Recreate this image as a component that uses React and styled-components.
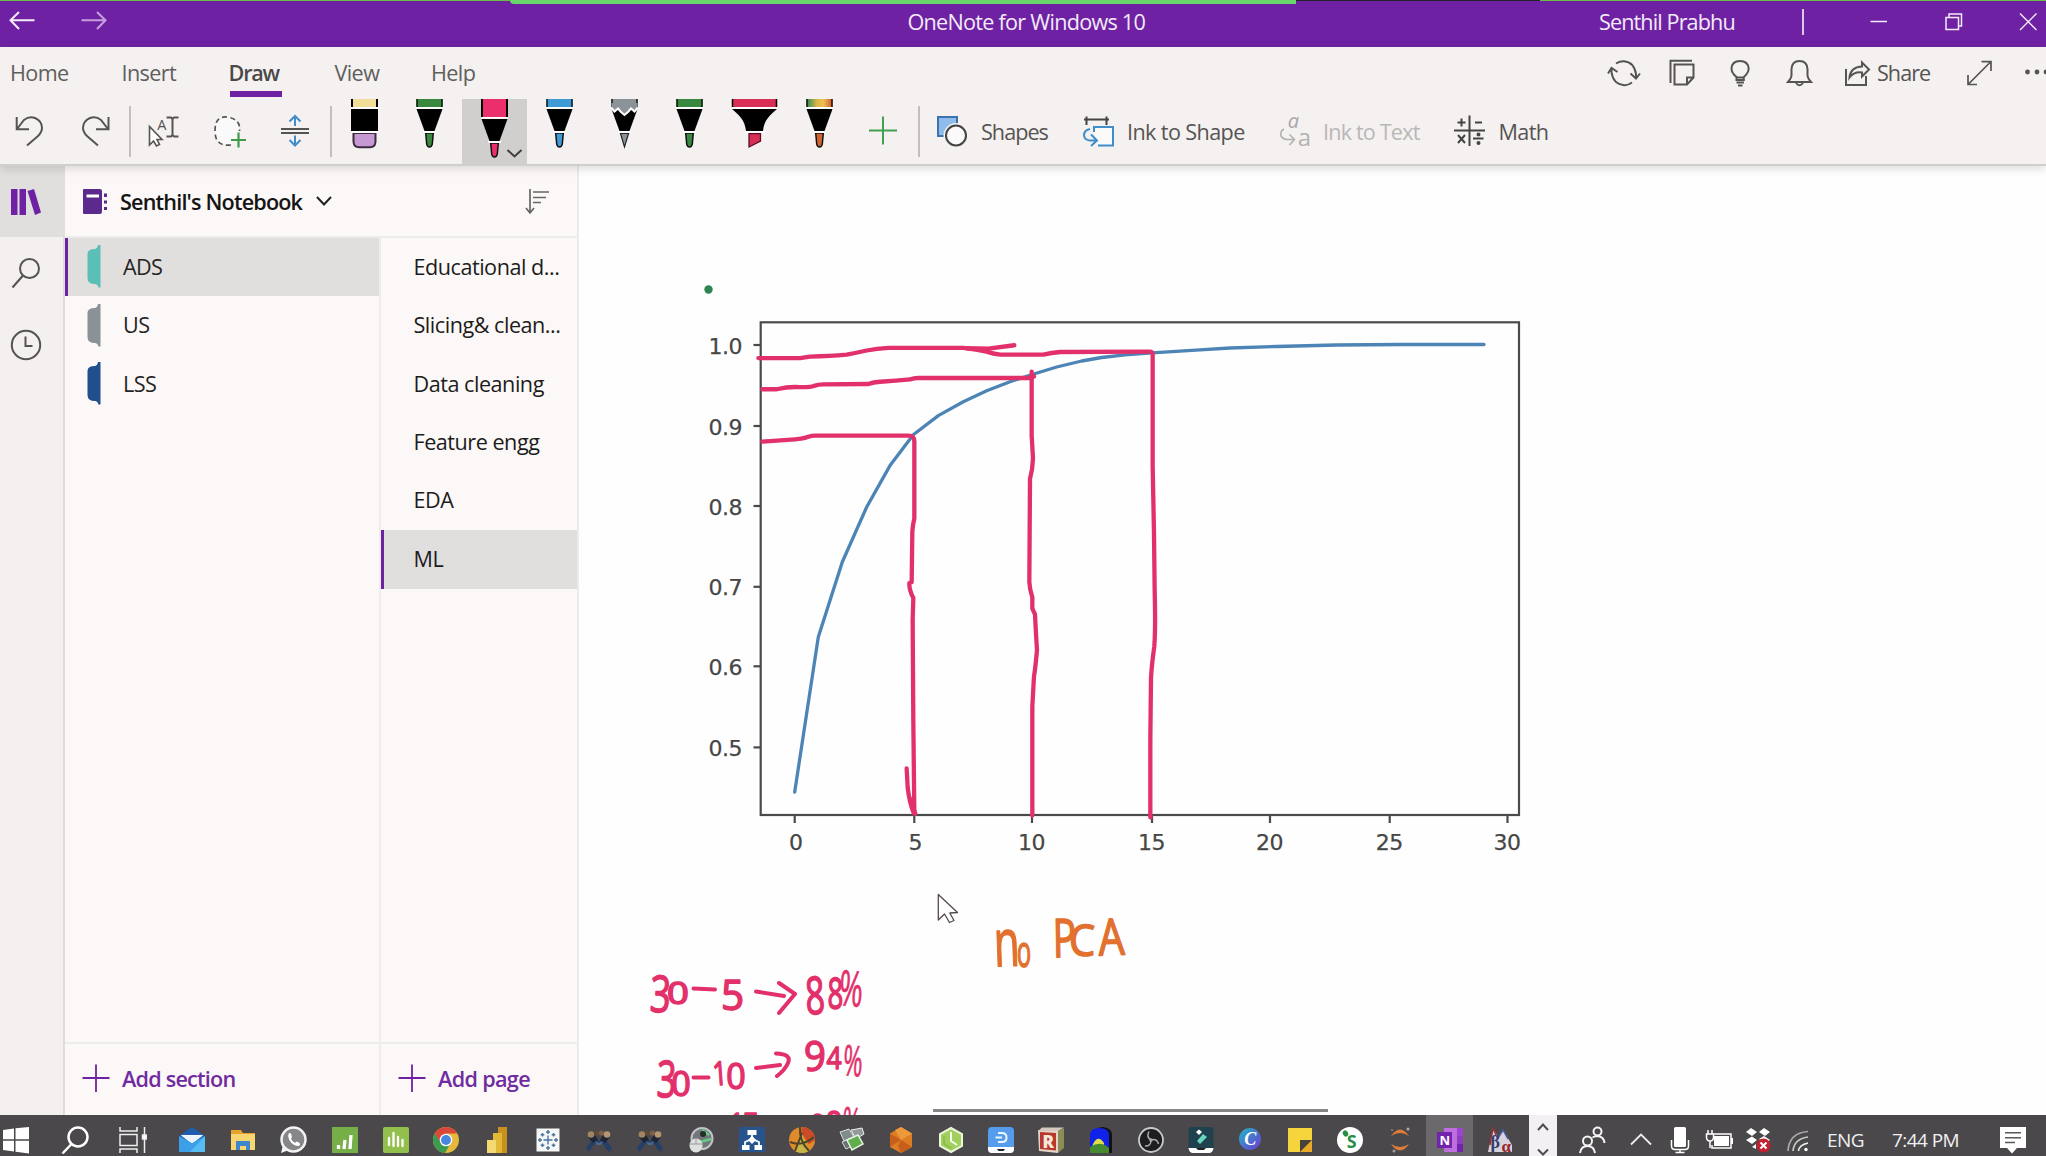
import React from "react";
import styled, { createGlobalStyle, css } from "styled-components";

const Global = createGlobalStyle`
  * { box-sizing: border-box; }
  html, body { margin: 0; padding: 0; overflow: hidden; }
  body { font-family: "Open Sans", "Noto Sans", sans-serif; font-size: 21.6px; letter-spacing: -0.028em; }
  svg { display: block; flex: none; }
`;

const PURPLE = "#6e22a3";
const INK = "#e2306a";
const ORANGE = "#e2702e";
const GREY = "#565453";

/* ---------- shell ---------- */
const Window = styled.div`
  position: relative;
  width: 2046px;
  height: 1156px;
  display: flex;
  flex-direction: column;
  overflow: hidden;
  background: #fefefe;
`;
const ShareEdge = styled.div`
  position: absolute;
  top: 0;
  left: 0;
  right: 0;
  display: flex;
  align-items: flex-start;
`;
const EdgePiece = styled.i`
  width: ${(p) => p.$w}px;
  height: ${(p) => p.$h}px;
  background: ${(p) => p.$c};
  border-bottom-left-radius: ${(p) => (p.$h > 2 ? 4 : 0)}px;
`;
const Drawing = styled.svg`
  margin-left: ${(p) => p.$ml || 0}px;
`;
const Label = styled.span`
  margin-left: ${(p) => p.$ml || 0}px;
  width: ${(p) => (p.$w ? p.$w + "px" : "auto")};
  flex: none;
  white-space: nowrap;
  color: ${(p) => p.$c || GREY};
  font-weight: ${(p) => p.$weight || 400};
  ${(p) => p.$ls && css`letter-spacing: ${p.$ls}em;`}
`;

const TitleBar = styled.header`
  flex: none;
  height: 47px;
  display: flex;
  align-items: center;
  padding-bottom: 4px;
  background: ${PURPLE};
`;
const TitleRule = styled.i`
  width: 2px;
  height: 26px;
  margin-left: 67px;
  background: #dcc6ea;
`;
const Ribbon = styled.section`
  position: relative;
  z-index: 1;
  flex: none;
  height: 119px;
  background: #f4f1f0;
  border-bottom: 2px solid #d1cfcd;
  box-shadow: 0 3px 9px rgba(0, 0, 0, 0.13);
`;
const TabRow = styled.nav`
  height: 52px;
  display: flex;
  align-items: center;
  ${Label} { padding-bottom: 2px; }
`;
const Tab = styled.div`
  position: relative;
  height: 52px;
  width: ${(p) => p.$w}px;
  margin-left: ${(p) => p.$ml}px;
  padding-bottom: 2px;
  display: flex;
  align-items: center;
  color: ${(p) => (p.$active ? "#4b4948" : "#605e5d")};
  font-weight: ${(p) => (p.$active ? 600 : 400)};
  letter-spacing: ${(p) => (p.$active ? "-0.055em" : "-0.028em")};
  &::after {
    content: "";
    display: ${(p) => (p.$active ? "block" : "none")};
    position: absolute;
    left: 1px;
    right: 0;
    bottom: 2px;
    height: 6px;
    background: ${PURPLE};
  }
`;
const ToolRow = styled.div`
  height: 65px;
  display: flex;
  align-items: center;
  ${Label} { padding-bottom: 1px; }
`;
const Rule = styled.i`
  flex: none;
  width: 2px;
  height: 51px;
  margin-left: ${(p) => p.$ml}px;
  background: #c1bfbf;
`;
const PenSlot = styled.div`
  flex: none;
  width: 65px;
  height: 65px;
  background: ${(p) => (p.$active ? "#d1cfce" : "transparent")};
`;

/* ---------- body ---------- */
const Body = styled.main`
  flex: 1;
  min-height: 0;
  display: flex;
`;
const Rail = styled.aside`
  flex: none;
  width: 65px;
  background: #f3f0ef;
  border-right: 2px solid #dfdddc;
`;
const RailItem = styled.div`
  width: 65px;
  height: ${(p) => p.$h}px;
  background: ${(p) => (p.$active ? "#e1dfde" : "transparent")};
`;
const Panel = styled.aside`
  flex: none;
  width: 514px;
  display: flex;
  flex-direction: column;
  background: #fbf8f7;
  border-right: 2px solid #ecebeb;
`;
const PanelHead = styled.div`
  flex: none;
  height: 72px;
  display: flex;
  align-items: center;
  border-bottom: 2px solid #eeeceb;
`;
const Columns = styled.div`
  flex: 1;
  display: flex;
`;
const Column = styled.div`
  width: ${(p) => p.$w}px;
  display: flex;
  flex-direction: column;
  border-right: ${(p) => (p.$last ? "none" : "2px solid #efedec")};
`;
const Row = styled.div`
  flex: none;
  height: 58.45px;
  display: flex;
  align-items: center;
  padding: 0 0 2px ${(p) => p.$pad}px;
  color: #1d1c1c;
  letter-spacing: -0.022em;
  white-space: nowrap;
  background: ${(p) => (p.$active ? "#e1dfde" : "transparent")};
  box-shadow: ${(p) => (p.$active ? `inset 3px 0 ${PURPLE}` : "none")};
`;
const ColumnFoot = styled.div`
  margin-top: auto;
  height: 73px;
  display: flex;
  align-items: center;
  padding: 0 0 2px 17px;
  border-top: 2px solid #eeeceb;
`;
const Canvas = styled.section`
  position: relative;
  flex: 1;
  background: #fefefe;
`;
const ScrollThumb = styled.i`
  position: absolute;
  left: 354px;
  bottom: 3px;
  width: 395px;
  height: 3px;
  background: #858585;
`;

/* ---------- taskbar ---------- */
const TaskBar = styled.footer`
  flex: none;
  height: 41px;
  display: flex;
  background: #4a484a;
`;
const TaskCell = styled.div`
  flex: none;
  height: 41px;
  width: ${(p) => p.$w}px;
  margin-left: ${(p) => p.$ml || 0}px;
  display: flex;
  justify-content: center;
  background: ${(p) => p.$bg || "transparent"};
`;
const TrayText = styled.span`
  flex: none;
  height: 41px;
  line-height: 50px;
  margin-left: ${(p) => p.$ml}px;
  width: ${(p) => p.$w}px;
  font-size: 19px;
  letter-spacing: -0.03em;
  color: #f2f0f2;
  white-space: nowrap;
`;

/* Each row of icons shares the window's coordinate system. */
const Icon = ({ x, w, y, h, ml, children, c = GREY, sw = 2 }) => (
  <Drawing $ml={ml} width={w} height={h} viewBox={`${x} ${y} ${w} ${h}`} fill="none" stroke={c} strokeWidth={sw}>
    {children}
  </Drawing>
);
const ToolIcon = (p) => <Icon y={99} h={65} {...p} />;
const TabIcon = (p) => <Icon y={47} h={52} {...p} />;
const TitleIcon = (p) => <Icon y={0} h={43} c="#f5ecfa" {...p} />;

const Pen = ({ color, kind }) => {
  const d = kind === "active" ? 10 : 0;
  const id = "rainbow";
  const fill = kind === "rainbow" ? `url(#${id})` : color;
  if (kind === "eraser")
    return (
      <svg width="65" height="65" viewBox="0 0 65 65">
        <path d="M19 0H46V8H19Z" fill="#f1dd97" />
        <path d="M20 0V8M45 0V8" stroke="#000" strokeWidth="2" />
        <path d="M19 8.8H46" stroke="#fff" strokeWidth="1.6" />
        <path d="M19 10H46V32H19Z" />
        <path d="M21.5 34V43Q22 48.300 27 48.300H38Q43 48.300 43.500 43V34Z" fill="#c799d3" stroke="#3b2c40" strokeWidth="2" />
        <path d="M19 33H46" stroke="#fff" strokeWidth="2" />
      </svg>
    );
  if (kind === "marker")
    return (
      <svg width="65" height="65" viewBox="0 0 65 65">
        <path d="M10 0H55V8H10Z" fill={color} />
        <path d="M10.500 0V8M54.500 0V8" stroke="#000" strokeWidth="1.500" />
        <path d="M10 8.900H55" stroke="#fff" strokeWidth="1.700" />
        <path d="M10 10H55C48 16 42 21 41 32H24C23 21 17 16 10 10Z" />
        <path d="M27 34.500H38.500V42L27 48Z" fill={color} stroke="#5a0f25" strokeWidth="1.300" />
        <path d="M23 33H42" stroke="#fff" strokeWidth="1.800" />
      </svg>
    );
  return (
    <svg width="65" height="65" viewBox="0 0 65 65">
      <defs>
        <linearGradient id={id}>
          <stop offset="0" stopColor="#2f8c4f" />
          <stop offset=".4" stopColor="#d9b64a" />
          <stop offset=".65" stopColor="#eec050" />
          <stop offset="1" stopColor="#d2552f" />
        </linearGradient>
      </defs>
      <path d={`M19.500 0H45.500V${8 + d}H19.500Z`} fill={fill} />
      <path d={`M20 0V${8 + d}M45 0V${8 + d}`} stroke="#000" strokeWidth={d ? 2 : 1.300} />
      <path d={`M19.500 ${10 + d}H45.500L37.500 ${32 + d}H27.500Z`} />
      {kind === "pencil" ? (
        <>
          <path d="M19.500 8L22.500 12 26 9.500 29 13 32.500 16 36 13 39 9.500 42.500 12 45.500 8V4H19.500Z" fill={color} />
          <path d="M19.500 9L22.500 12.500 26 9.500 29 13 32.500 16 36 13 39 9.500 42.500 12.500 45.500 9" fill="none" stroke="#fff" strokeWidth="2" />
          <path d="M28.500 34.500H36.500L32.500 48Z" fill={color} stroke="#222" strokeWidth="1.200" />
        </>
      ) : (
        <>
          <path d={`M19 ${8.900 + d}H46`} stroke="#fff" strokeWidth="1.800" />
          <path
            d={`M28.700 ${34 + d}H36.300L35.300 ${45 + d}Q34.800 ${48 + d} 32.500 ${48 + d}T29.700 ${45 + d}Z`}
            fill={kind === "rainbow" ? "#cf6430" : color}
            stroke="#111"
            strokeWidth="1.500"
          />
        </>
      )}
      <path d={`M26 ${33 + d}H39`} stroke="#fff" strokeWidth="2" />
      {d > 0 && <path d="M45.500 51L52.500 57.500 59.500 51" fill="none" stroke="#3f3d3d" strokeWidth="2" />}
    </svg>
  );
};

const PENS = [
  { kind: "eraser" },
  { kind: "pen", color: "#38893f" },
  { kind: "active", color: "#ea2f6b" },
  { kind: "pen", color: "#3f9bd6" },
  { kind: "pencil", color: "#8b9399" },
  { kind: "pen", color: "#38893f" },
  { kind: "marker", color: "#d92f55" },
  { kind: "rainbow" },
];

const SECTIONS = [
  ["ADS", "#5bbfb5"],
  ["US", "#8a9298"],
  ["LSS", "#204f8b"],
];
const PAGES = ["Educational d...", "Slicing& clean...", "Data cleaning", "Feature engg", "EDA", "ML"];

const SectionMark = ({ color }) => (
  <Drawing width="14" height="44" viewBox="0 0 14 44">
    <path d="M13.500 1V43.500H11.500Q10.500 40 8 40Q.5 40 .5 34V10Q.5 5 8 5Q10.500 4.500 11 1Z" fill={color} />
  </Drawing>
);

/* One handwritten character, fitted to the box that the pen covered. */
const Stroke = ({ ch, x, y, w, h, em = 0.47, cap = 0.73, rot = 0, c = INK }) => {
  const size = h / cap;
  const sx = w / (em * size);
  return (
    <text
      transform={`translate(${x + w / 2} ${y + h}) rotate(${rot}) scale(${sx} 1)`}
      textAnchor="middle"
      fontSize={size}
      letterSpacing="0"
      fill={c}
      stroke={c}
      strokeWidth={ch === "%" ? 0.6 : 1.5}
      strokeLinejoin="round"
    >
      {ch}
    </text>
  );
};

const NOTES = [
  ["3", 651, 975, 17, 37, 0.47, 3],
  ["0", 669, 981, 18, 23],
  ["5", 723, 980, 19, 30],
  ["8", 808, 976, 16, 38, 0.47, -3],
  ["8", 829, 977, 13, 32],
  ["3", 658, 1060, 16, 37, 0.47, 2],
  ["0", 673, 1071, 16, 25],
  ["1", 717, 1061, 7, 24, 0.28, -4],
  ["0", 728, 1062, 16, 27],
  ["9", 806, 1041, 18, 30],
  ["4", 827, 1046, 14, 23, 0.53],
  ["1", 732, 1113, 9, 28, 0.28],
  ["5", 743, 1113, 15, 28],
  ["9", 811, 1114, 14, 28],
  ["8", 827, 1111, 14, 28],
];

const X_TICKS = [[794.700, "0"], [914.300, "5"], [1032, "10"], [1152, "15"], [1270, "20"], [1389.700, "25"], [1507.500, "30"]];
const Y_TICKS = [[345, "1.0"], [426, "0.9"], [506, "0.8"], [586.800, "0.7"], [666.300, "0.6"], [747.400, "0.5"]];

const NotePage = () => (
  <svg width="1467" height="949" viewBox="579 166 1467 949" fill="none" strokeLinecap="round" strokeLinejoin="round">
    <circle cx="708.500" cy="289.500" r="4.200" fill="#2f8550" />
    <rect x="760.700" y="322.300" width="758.300" height="492.700" stroke="#4a4a4a" strokeWidth="2.200" strokeLinejoin="miter" />
    <g stroke="#4a4a4a" strokeWidth="2.200" strokeLinecap="butt">
      {X_TICKS.map(([x]) => <path key={x} d={`M${x} 815V823`} />)}
      {Y_TICKS.map(([y]) => <path key={y} d={`M753.500 ${y}H761`} />)}
    </g>
    <g fill="#464646" stroke="#464646" strokeWidth="0.250" fontFamily="DejaVu Sans" fontSize="22" letterSpacing="-0.500">
      {X_TICKS.map(([x, t]) => <text key={x} x={t.length > 1 ? x - 0.500 : x + 1} y="850" textAnchor="middle">{t}</text>)}
      {Y_TICKS.map(([y, t]) => <text key={y} x="742" y={y + 8.500} textAnchor="end">{t}</text>)}
    </g>
    <path
      stroke="#4c84b6"
      strokeWidth="3.300"
      d="M794.700 792L818.300 637 842.300 562 866.700 507 890 465.600 913.300 434.800 938.300 415.600 963.300 401.700 986.700 390.800 1010 381.700 1033 374.200 1056.700 367 1081.700 361 1101.700 357.500 1125 354.800 1152 352.800 1200 349.800 1230 348 1276.700 346.500 1336.700 345 1400 344.500 1484 344.500"
    />
    <g transform="translate(680 270) scale(.33333 .37622)" stroke={INK}>
      {[
        "M235 234H360Q375 232 390 230 450 229 500 225 530 220 560 214 590 209 625 207H850Q890 211 920 217 940 223 960 225H1090Q1115 220 1140 218L1410 217Q1418 217 1418 226L1418 520 1422 700 1424 850Q1427 950 1423 1000 1415 1050 1413 1085L1411 1250V1455",
        "M860 208L925 209 1003 200",
        "M247 317H290Q320 311 345 311 390 313 402 308 415 304 430 304L565 303Q580 298 600 297 650 295 690 291 700 287 715 287H1050L1062 283",
        "M247 456L345 450Q370 448 385 443 395 440 405 440H685Q703 440 703 455V660Q698 680 697 695L695 830 688 832Q687 850 700 872L698 930 700 1200 703 1445",
        "M680 1325L683 1375Q688 1415 701 1443L706 1445 690 1405",
        "M1055 270V440L1059 500Q1058 530 1050 555L1048 830Q1049 848 1057 870V900L1065 915Q1068 970 1071 1010 1066 1060 1062 1080L1057 1160V1450",
      ].map((d) => <path key={d} d={d} strokeWidth="4.300" vectorEffect="non-scaling-stroke" />)}
    </g>
    <g stroke={INK} strokeWidth="4">
      <path d="M693.500 988.500L715 989.500M756 991.500L784 996M779 983L795 994 779 1013M693.500 1077.500H708.500M756 1068L780 1065M776 1053.500Q792 1054 788 1063 785 1070 777 1076" />
    </g>
    {NOTES.map(([ch, x, y, w, h, em, rot], i) => <Stroke key={i} ch={ch} x={x} y={y} w={w} h={h} em={em} rot={rot} />)}
    <Stroke ch="%" x={839} y={970} w={22} h={36} em={0.76} rot={4} />
    <Stroke ch="%" x={843} y={1045} w={18} h={31} em={0.76} rot={4} />
    <Stroke ch="%" x={842} y={1107} w={17} h={31} em={0.76} rot={4} />
    <Stroke ch="n" x={998} y={930} w={19} h={36} em={0.45} cap={0.545} rot={-2} c={ORANGE} />
    <Stroke ch="o" x={1018} y={942} w={12} h={25} em={0.5} cap={0.56} c={ORANGE} />
    <Stroke ch="P" x={1056} y={918} w={17} h={39} em={0.44} rot={-1} c={ORANGE} />
    <Stroke ch="C" x={1071} y={924} w={22} h={32} em={0.53} c={ORANGE} />
    <Stroke ch="A" x={1099} y={918} w={26} h={37} em={0.63} rot={-2} c={ORANGE} />
    <path d="M938.300 894.500V920L944.500 914 949.500 922.500 954 920.500 949.800 913 957.500 912.500Z" fill="#fff" stroke="#55484f" strokeWidth="1.300" />
  </svg>
);

/* Taskbar glyphs: 28 × 41 box, centred on (14, 25). */
const glyphs = {
  start: <path fill="#fff" d="M1 15L12 13.500V24.300H1ZM13.500 13.200L27 12V24.300H13.500ZM1 25.800H12V36.500L1 35ZM13.500 25.800H27V38.500L13.500 36.700Z" />,
  search: <g fill="none" stroke="#fff" strokeWidth="2.500"><circle cx="17" cy="22" r="9.500" /><path d="M10.500 29L1.500 38.500" /></g>,
  view: (
    <g fill="none" stroke="#eee" strokeWidth="1.500">
      <path d="M1 12V16H18V12M1 38V34H18V38M1 19.500H18V30.500H1ZM25.500 12V38" />
      <path d="M23.500 20H27.500V24H23.500Z" fill="#fff" />
    </g>
  ),
  mail: <><path fill="#1d5fae" d="M1 21L14 12 27 21V30H1Z" /><path fill="#fff" d="M3 20H25L14 29Z" /><path fill="#3ba0e8" d="M1 21L14 28 27 21V37H1Z" /><path fill="#e9f4fd" d="M3 20.500H25L14 28Z" /><path fill="#55bdf3" d="M27 21L12 37H27Z" /></>,
  folder: <><path fill="#e5a22c" d="M2 15H12L14 18H26V22H2Z" /><path fill="#f7d570" d="M2 19H26V35H2Z" /><path fill="#3f86cc" d="M7 26H21V35H17V31H11V35H7Z" /></>,
  whatsapp: <><circle cx="14.500" cy="24.500" r="12" fill="#87878a" stroke="#f3f3f3" strokeWidth="2.500" /><path d="M2 38L4 30 10 35Z" fill="#f3f3f3" /><path d="M10 18Q8 21 11 26T20 31Q22 29 20 27.500L17.500 26.500 16 28Q13 26.500 12 23.500L13 22 12 18.500Z" fill="#fff" /></>,
  bars: <><path fill="#76ae48" d="M1 12H27V38H1Z" /><path stroke="#fff" strokeWidth="3.300" d="M7.500 34V30M13 34L14 25M19 34L20 20" /></>,
  bars2: <><rect x="1" y="12" width="26" height="26" rx="2" fill="#93bf4d" /><path stroke="#fff" strokeWidth="2.300" strokeLinecap="round" d="M7 23V30M11.500 18V31M16 22V31M20.500 25V31" /></>,
  chrome: <><circle cx="14" cy="25" r="13" fill="#e6b93c" /><path fill="#d9483b" d="M2.700 18.500A13 13 0 0 1 25.300 18.500H14L8 28Z" /><path fill="#3d9b4f" d="M2.700 18.500A13 13 0 0 0 13 38L18.500 28.500 9 28Z" /><circle cx="14" cy="25" r="6.300" fill="#fff" /><circle cx="14" cy="25" r="5" fill="#4a86e0" /></>,
  bi: <><path fill="#c8901f" d="M15 12H24V38H15Z" /><path fill="#e5b737" d="M10 18H19V38H10Z" /><path fill="#f4d872" d="M4 25H13V38H4Z" /></>,
  tableau: <><path fill="#f6f6f6" d="M2.500 13.500H25.500V36.500H2.500Z" /><g stroke="#48759e" strokeWidth="1.400"><path d="M14 20.500V29.500M9.500 25H18.500M14 15V19M12 17H16M14 31V35M12 33H16M6 23V27M4 25H8M22 23V27M20 25H24M8.500 18V21.500M6.700 19.700H10.300M19.500 18V21.500M17.700 19.700H21.300M8.500 28.500V32M6.700 30.300H10.300M19.500 28.500V32M17.700 30.300H21.300" /></g></>,
  figures: <><path fill="#263f66" d="M1 33L9 22 14 26 19 22 27 33 25 37 21 34 18 28 14 30 10 28 6 34 3 37Z" /><path fill="#1c2636" d="M3 22L10 20 13 25 8 28ZM18 20L25 22 20 28 15 25Z" /><circle cx="6" cy="19.500" r="3.300" fill="#a08560" /><circle cx="11.500" cy="18" r="2.600" fill="#5e4a3b" /><circle cx="16.500" cy="18" r="2.600" fill="#7b6149" /><circle cx="22" cy="19.500" r="3.300" fill="#b29571" /><path fill="#4a6a96" d="M10 26L14 28 18 26 16 30H12Z" /></>,
  mouse: <><circle cx="15" cy="23.500" r="10.500" fill="#72777a" stroke="#bfc4c6" strokeWidth="2" /><path d="M15 15L22 20M13 27L24 24" stroke="#60cf82" strokeWidth="2.500" /><circle cx="16" cy="19" r="3" fill="#252c2b" /><ellipse cx="9" cy="30.500" rx="6.500" ry="7" fill="#dedfdf" /><path d="M9 24V29M3 29H15" stroke="#989b9b" /></>,
  tree: <><path fill="#28548e" d="M1 12H27V37H1Z" /><path stroke="#fff" strokeWidth="1.800" fill="none" d="M14 20V26M7 31V27L14 24 21 27V31" /><path fill="#fff" d="M9.500 15H18.500V20H9.500ZM14 20.500L18 25 14 29 10 25ZM4 30H11.500V35H4ZM16.500 30H24V35H16.500Z" /></>,
  ball: <><circle cx="14" cy="25" r="13" fill="#e08a2b" /><path fill="#cb4a28" d="M14 12A13 13 0 0 1 27 25L21 29 13 18Z" /><path fill="#c9b545" d="M14 19L21 36Q14 40 7 36Z" /><path stroke="#4b4428" strokeWidth="2" fill="none" d="M2 27Q14 32 26 22M12 12Q11 26 21 36M14 18L7 36" /></>,
  cards: <><path fill="#818a8c" stroke="#d9dfdf" d="M3 17L12 14 17 22 7 26Z" /><path fill="#929a9b" stroke="#eee" d="M14 15L25 13 27 19 19 24Z" /><path fill="#687073" stroke="#d9dfdf" d="M5 27L12 24 15 31 9 34Z" /><path fill="#60ad4c" stroke="#e6f0e3" strokeWidth="1.500" d="M10 25L21 20 26 29 15 35Z" /></>,
  hex: <><path fill="#dd7e25" d="M14 12L25 18.500V32L14 38 3 32V18.500Z" /><path fill="#ed9a3b" d="M14 12L25 18.500 14 25 8 15Z" /><path fill="#c65f1c" d="M14 25L25 32 14 38 11 31ZM3 18.500L14 25 3 32Z" /></>,
  hexg: <><path fill="#a1cf5d" stroke="#ebf6d9" strokeWidth="2" d="M14 13L25 19V31L14 37 3 31V19Z" /><path stroke="#f7fff0" strokeWidth="2" fill="none" d="M14 17V26L20 30" /><path stroke="#82b53f" strokeWidth="1.200" fill="none" d="M7 21V29L14 33" /></>,
  dapp: <><rect x="1" y="12" width="26" height="26" rx="4" fill="#559dec" /><path fill="#fff" d="M1 32H27V34Q27 38 23 38H5Q1 38 1 34Z" /><path fill="#222" d="M10 34H18L16.500 36H11.500Z" /><path d="M11 18H15Q19.500 18 19.500 22.500T15 27H11M8.500 22.500H15" stroke="#e9f7ff" strokeWidth="2" fill="none" /></>,
  r: <><path fill="#e3d6c9" d="M1 15L21 16V38L2 36Z" /><path fill="#8c8c55" d="M21 16L27 13V33L21 38Z" /><path fill="#d5c9bf" d="M5 12.500H27L21 16H1Z" /><path fill="#b9382d" d="M3 17L19 18V35.500L3 34Z" /><text x="11" y="33" textAnchor="middle" fontSize="17" fontWeight="800" fill="#f3e8d9">R</text></>,
  door: <><path fill="#111" d="M7 38V19Q8 12 16 12 25 13 25 20V38Z" /><path fill="#1021e8" d="M3 38V19Q4 13 12.500 13T22 19V38Z" /><path fill="#e1df48" d="M6 29Q11 19 17 28V32H5Z" /><path fill="#448b2f" d="M3 32Q14 25 22 33V38H3Z" /></>,
  obs: <><circle cx="14" cy="25" r="12" fill="#1d1c1e" stroke="#c9c9ca" strokeWidth="1.800" /><path fill="none" stroke="#a9a9ab" strokeWidth="1.500" d="M14 25Q9 22 12 16.500M14 25Q20 23 21.500 29M14 25Q14 31.500 8 31" /><circle cx="14" cy="25" r="1.800" fill="#a9a9ab" /></>,
  filmora: <><rect x="1.500" y="12" width="25" height="26" rx="3" fill="#20424f" /><path fill="#fff" d="M1.500 33H26.500Q26 38 22 38H6Q2 38 1.500 33Z" /><path fill="#222" d="M9 33H19L17 35H11Z" /><path fill="#67d6bc" d="M10 26L16 19 20 22 13 29Z" /><path fill="#fff" d="M9 17L12 14.500 15 17 12 20Z" /></>,
  canva: <><defs><linearGradient id="cv" x2="1" y2="1"><stop offset="0" stopColor="#24b9c7" /><stop offset=".5" stopColor="#4875cd" /><stop offset="1" stopColor="#6c3bd1" /></linearGradient></defs><circle cx="14" cy="24" r="11" fill="url(#cv)" /><text x="14" y="30" textAnchor="middle" fontFamily="Liberation Serif" fontStyle="italic" fontWeight="700" fontSize="18" fill="#fff">C</text></>,
  sticky: <><path fill="#f6d53c" d="M2 13H26V37H2Z" /><path fill="#e7a927" d="M14 37L26 25V37Z" /><path fill="#46433a" d="M14 25H26L14 37Z" /></>,
  s: <><circle cx="14" cy="25" r="13" fill="#fff" /><text x="15.500" y="33" textAnchor="middle" fontSize="18" fontWeight="700" fill="#298f46">S</text><ellipse cx="9.500" cy="18.500" rx="2.600" ry="3.200" transform="rotate(-30 9.500 18.500)" fill="#298f46" /></>,
  jupyter: <><path fill="#df7c37" d="M5 21Q14 8 23 21Q14 15 5 21ZM5 29Q14 42 23 29Q14 35 5 29Z" /><circle cx="22" cy="14" r="1.500" fill="#aaa" /><circle cx="8" cy="36" r="1.600" fill="#999" /><circle cx="6" cy="15" r="1" fill="#888" /></>,
  onenote: <><path fill="#bd6fe0" d="M8 13H27V37H8Z" /><path fill="#9c46cf" d="M21 13H27V21H21Z" /><path fill="#8d3ec0" d="M21 21H27V29H21Z" /><path fill="#7324ad" d="M21 29H27V37H21ZM1 17H16V33H1Z" /><text x="8.500" y="30" textAnchor="middle" fontSize="13" fontWeight="700" fill="#fff">N</text></>,
  beta: <><path fill="#d8d2de" d="M2 37L7 13 12 22 17 15 26 30V37Z" /><path stroke="#9b2f36" strokeWidth="1.500" d="M4 30L7 13 10 20" fill="none" /><path stroke="#48579f" strokeWidth="1.500" d="M12 23L17 15 22 24" fill="none" /><text x="9" y="33" textAnchor="middle" fontFamily="Liberation Serif" fontWeight="700" fontSize="18" fill="#34406d">β</text><text x="20" y="36.500" textAnchor="middle" fontFamily="Liberation Serif" fontWeight="700" fontSize="17" fill="#96272b">α</text></>,
  people: <g fill="none" stroke="#f5f5f5" strokeWidth="2"><circle cx="19.500" cy="16.500" r="4" /><circle cx="9.500" cy="26" r="4.500" /><path d="M2 38Q3 31 9.500 31T17 38M14.500 22.500Q17 21 20 21 26 22 26.500 28" /></g>,
  up: <path d="M4 29.500L14 19.500 24 29.500" fill="none" stroke="#eee" strokeWidth="1.800" />,
  mic: <><rect x="8" y="12" width="12" height="20" rx="1.500" fill="#fff" /><path d="M5.500 25V31Q5.500 34.500 9 34.500H19Q22.500 34.500 22.500 31V25M14 34V37.500M9.500 37.500H18.500" fill="none" stroke="#fff" strokeWidth="1.500" /></>,
  battery: <><path fill="#fff" d="M9 21H24V31H9Z" /><path d="M8 19H26V33H7V30M27.500 23V29M3 15V19M7 15V19M1.500 19H8.500V22Q8.500 26 5 26T1.500 22ZM5 26V33" fill="none" stroke="#fff" strokeWidth="1.500" /></>,
  dropbox: <><path fill="#fff" d="M2 17L7 13 13 17 8 21ZM15 17L20 13 26 17 21 21ZM2 25L8 21.500 13 25 8 29ZM15 24L20 21 26 25 21 29ZM8 32L12 29V34Z" /><circle cx="19.500" cy="30.500" r="7" fill="#c32030" /><path d="M16.500 27.500L22.500 33.500M22.500 27.500L16.500 33.500" stroke="#fff" strokeWidth="2" /></>,
  wifi: <g fill="none" strokeWidth="1.700"><path d="M4 36Q5 18 24 16.500" stroke="#aaa" /><path d="M9 36Q10 24 24 22" stroke="#ccc" /><path d="M14.500 36Q15 30 24 28" stroke="#eee" /><circle cx="22" cy="34.500" r="1.700" fill="#fff" stroke="none" /></g>,
  notice: <><path fill="#fff" d="M1 12H27V33H18L13 38.500 8 33H1Z" /><path stroke="#5a585a" strokeWidth="1.600" d="M6 17.800H22M6 22.800H22M6 27.500H16" /></>,
};

const APPS = [
  ["start", 16], ["search", 75], ["view", 133], ["mail", 191.500], ["folder", 242.500], ["whatsapp", 293], ["bars", 344.500],
  ["bars2", 396], ["chrome", 446], ["bi", 497], ["tableau", 547.500], ["figures", 599], ["figures", 650], ["mouse", 700.500],
  ["tree", 752], ["ball", 801.500], ["cards", 851], ["hex", 901], ["hexg", 951], ["dapp", 1001], ["r", 1051], ["door", 1101],
  ["obs", 1150.500], ["filmora", 1200.500], ["canva", 1250], ["sticky", 1300], ["s", 1350], ["jupyter", 1400],
  ["onenote", 1449.500, 47, "#6b696b"], ["beta", 1500],
];
const TRAY = [["people", 1592], ["up", 1641], ["mic", 1679.500], ["battery", 1719], ["dropbox", 1758], ["wifi", 1798]];

const renderCells = (items, from) => {
  let edge = from;
  return items.map(([name, cx, w = 28, bg]) => {
    const left = cx - w / 2;
    const ml = left - edge;
    edge = left + w;
    return (
      <TaskCell key={name + cx} $ml={ml} $w={w} $bg={bg}>
        <svg width="28" height="41" viewBox="0 0 28 41">{glyphs[name]}</svg>
      </TaskCell>
    );
  });
};

export default function App() {
  return (
    <Window>
      <Global />
      <TitleBar>
        <TitleIcon x={8} w={28} ml={8}><path d="M34.500 20.300H11M19 12L10.500 20.300 19 29" /></TitleIcon>
        <TitleIcon x={80} w={28} ml={44} c="#c69fdd"><path d="M81.500 20.300H105M97 12L105.500 20.300 97 29" /></TitleIcon>
        <Label $ml={799.500} $w={241.500} $c="#f3eaf8" $ls={-0.034}>OneNote for Windows 10</Label>
        <Label $ml={450} $w={136} $c="#f3eaf8" $ls={-0.041}>Senthil Prabhu</Label>
        <TitleRule />
        <TitleIcon x={1868} w={21} ml={64} sw={1.500}><path d="M1870.500 21.500H1887" /></TitleIcon>
        <TitleIcon x={1943} w={21} ml={54} sw={1.500}><path d="M1946 17.500H1958.500V29.500H1946ZM1949 17V14H1961.500V26H1959" /></TitleIcon>
        <TitleIcon x={2018} w={21} ml={54} sw={1.400}><path d="M2020 13.500L2036.500 30M2036.500 13.500L2020 30" /></TitleIcon>
      </TitleBar>

      <Ribbon>
        <TabRow>
          <Tab $ml={10} $w={60}>Home</Tab>
          <Tab $ml={51.500} $w={56}>Insert</Tab>
          <Tab $ml={51} $w={53} $active>Draw</Tab>
          <Tab $ml={53} $w={48}>View</Tab>
          <Tab $ml={48.500} $w={48}>Help</Tab>
          <TabIcon x={1606} w={36} ml={1127}>
            <path d="M1616 63.500Q1620 61 1624 61.200 1634 62 1636 74V78M1630.500 73.500L1636 78.500 1640 73.500M1632 82.500Q1628 85.500 1624 85.200 1613 84 1611.500 72V68.500M1608 73.500L1611.500 68 1617.500 72" />
          </TabIcon>
          <TabIcon x={1667} w={30} ml={25}>
            <path d="M1692 60.800H1670.500V83M1674.500 64.500H1693.500V77.500L1687 84.500H1674.500ZM1687 84V77.500H1693" />
          </TabIcon>
          <TabIcon x={1728} w={24} ml={31}>
            <path d="M1736.500 80V77Q1731.500 73 1731.500 68.500 1732 61 1740 61T1748.700 68.500Q1748.500 73 1743.800 77V80ZM1736.500 82.500H1744M1738 85.500H1742.500M1736.500 77.500H1744" />
          </TabIcon>
          <TabIcon x={1785} w={29} ml={33}>
            <path d="M1788 82H1811Q1807.500 78 1807.500 75V69Q1807 61 1799.500 61T1791.500 69V75Q1791.500 78 1788 82ZM1796 83Q1799.500 87.500 1803 83" />
          </TabIcon>
          <TabIcon x={1842} w={30} ml={28}>
            <path d="M1846 69V85H1866V76M1862 62.500L1869 69.500 1862 76.500V72.500Q1854 71.500 1849.500 77.500 1850.500 67 1862 66.500Z" />
          </TabIcon>
          <Label $ml={5} $w={54} $ls={-0.045}>Share</Label>
          <TabIcon x={1965} w={30} ml={34} sw={1.700}>
            <path d="M1968.500 84L1990.500 62M1981.500 61.700H1991V71M1968 75V84.500H1977" />
          </TabIcon>
          <TabIcon x={2022} w={24} ml={27}>
            <g fill={GREY} stroke="none"><circle cx="2027.500" cy="72" r="2.400" /><circle cx="2037" cy="72" r="2.400" /><circle cx="2046" cy="72" r="2.400" /></g>
          </TabIcon>
        </TabRow>
        <ToolRow>
          <ToolIcon x={14} w={32} ml={14}><path d="M16.700 117V129.300H29M17 129L24 120Q29 116 35 118 42 121 42 128 42 132 38 136L27 145.500" /></ToolIcon>
          <ToolIcon x={80} w={32} ml={34}><path d="M108.500 117V129.300H96M108 129L101 120Q96 116 90 118 83 121 83 128 83 132 87 136L98 145.500" /></ToolIcon>
          <Rule $ml={17} />
          <ToolIcon x={145} w={37} ml={14}>
            <path d="M149.500 126.500V145L153.500 141 156.500 146 159.500 144.500 157 139.500 162 139.500Z" fill="#fff" strokeWidth="1.600" />
            <text x="161.500" y="129.500" textAnchor="middle" fontSize="14.500" fill={GREY} stroke="none">A</text>
            <path d="M166.500 117.500H171Q172.500 118 172.500 120V134Q172.500 136 171 136.500H166.500M178.500 117.500H174Q172.500 118 172.500 120M178.500 136.500H174Q172.500 136 172.500 134" />
          </ToolIcon>
          <ToolIcon x={211} w={38} ml={29}>
            <ellipse cx="227" cy="131" rx="11.800" ry="14" fill="#fafafa" stroke="none" />
            <path d="M231 145Q215 147 215 131T228 117.200 239.500 131" strokeDasharray="5 3.300" strokeWidth="1.700" />
            <path d="M238.500 132.500V147.500M231 140H246" stroke="#3f9a4c" strokeWidth="2.200" />
          </ToolIcon>
          <ToolIcon x={279} w={32} ml={30}>
            <path d="M281 129H309M281 133H309" />
            <path d="M295 126V117M289.500 121.500L295 116 300.500 121.500M295 135.500V145M289.500 140L295 145.500 300.500 140" stroke="#3f8ecb" />
          </ToolIcon>
          <Rule $ml={19} />
          {PENS.map((p, i) => (
            <PenSlot key={i} $active={p.kind === "active"}><Pen {...p} /></PenSlot>
          ))}
          <ToolIcon x={867} w={32} ml={15} c="#43a04f"><path d="M883 116.500V144.500M869 130.500H897" /></ToolIcon>
          <Rule $ml={19} />
          <ToolIcon x={935} w={34} ml={15}>
            <path d="M938 117H957V136H938Z" fill="#8fbcea" stroke="#3c73ad" />
            <circle cx="956" cy="135.500" r="12.500" fill="#f4f1f0" stroke="none" />
            <circle cx="956" cy="135.500" r="10" fill="#fbfafa" stroke="#454343" />
          </ToolIcon>
          <Label $ml={12} $w={67} $ls={-0.045}>Shapes</Label>
          <ToolIcon x={1081} w={35} ml={33}>
            <path d="M1084 119.500H1109M1086.500 116.500V125M1106.500 116.500V125" stroke="#454343" />
            <path d="M1094 132V127H1113V145.500H1098" fill="#fbfafa" stroke="#3f8ecb" />
            <path d="M1090 129Q1084 130 1084 135.500 1084.500 140 1090 140.500H1096M1091 134.500L1097 140.500 1091 146" stroke="#3f8ecb" />
          </ToolIcon>
          <Label $ml={11} $w={118}>Ink to Shape</Label>
          <ToolIcon x={1278} w={34} ml={33} c="#b4b2b1">
            <text x="1293" y="128" textAnchor="middle" fontSize="20" fontStyle="italic" fill="#a9a7a6" stroke="none">a</text>
            <text x="1304" y="145.500" textAnchor="middle" fontSize="24" fill="#b4b2b1" stroke="none">a</text>
            <path d="M1284 129Q1280 131 1281 136 1283 139.500 1288 139.500H1294M1289.500 134.500L1294.500 139.500 1289.500 145" strokeWidth="1.600" />
          </ToolIcon>
          <Label $ml={11} $w={98} $c="#b9b7b6" $ls={-0.038}>Ink to Text</Label>
          <ToolIcon x={1452} w={35} ml={31} c="#454343">
            <path d="M1469.500 115.500V146M1454 130.500H1485M1461.500 118.500V126.500M1457.500 122.500H1465.500M1475 122.500H1482M1458 135L1465 143M1465 135L1458 143M1473 138.500H1483.500" />
            <circle cx="1478.500" cy="134.500" r="1" /><circle cx="1478.500" cy="143" r="1" />
          </ToolIcon>
          <Label $ml={11.500}>Math</Label>
        </ToolRow>
      </Ribbon>

      <Body>
        <Rail>
          <RailItem $h={71} $active>
            <svg width="65" height="71" viewBox="0 166 65 71" fill={PURPLE}>
              <path d="M11 189H17.500V215H11ZM19.500 189H26V215H19.500ZM27.500 191L34 189 41 212.500 35 215Z" />
            </svg>
          </RailItem>
          <RailItem $h={73}>
            <svg width="65" height="73" viewBox="0 237 65 73" fill="none" stroke={GREY} strokeWidth="2">
              <circle cx="29.500" cy="268.500" r="9.500" /><path d="M23 275.500L12.500 287.500" />
            </svg>
          </RailItem>
          <RailItem $h={73}>
            <svg width="65" height="73" viewBox="0 310 65 73" fill="none" stroke={GREY} strokeWidth="2">
              <circle cx="26" cy="345" r="14.200" /><path d="M25.500 336.500V346H32.500" />
            </svg>
          </RailItem>
        </Rail>

        <Panel>
          <PanelHead>
            <Drawing $ml={17} width="27" height="27" viewBox="0 0 27 27" fill="#5b2a8c">
              <path d="M1 2Q1 1 2 1H18Q20 1 20 3V23Q20 26 18 26H2Q1 26 1 25Z" />
              <path d="M4.500 6.500H17V9.500H4.500Z" fill="#fff" />
              <path d="M22 5.500H25V9H22ZM22 12.500H25V15.500H22ZM22 19H25V22H22Z" />
            </Drawing>
            <Label $ml={11} $w={184} $c="#151414" $weight={600} $ls={-0.038}>Senthil's Notebook</Label>
            <Drawing $ml={12} width="16" height="12" viewBox="0 0 16 12" fill="none" stroke="#222" strokeWidth="2"><path d="M1 2L8 9.500 15 2" /></Drawing>
            <Drawing $ml={193} width="26" height="27" viewBox="0 0 26 27" fill="none" stroke="#686665" strokeWidth="1.700">
              <path d="M5 1V25M1 20L5 25 9 20M8 4H24M8 9.500H21M8 14.500H16" />
            </Drawing>
          </PanelHead>
          <Columns>
            <Column $w={316}>
              {SECTIONS.map(([name, color], i) => (
                <Row key={name} $pad={22} $active={i === 0}>
                  <SectionMark color={color} />
                  <Label $ml={22} $c="#252424" $ls={-0.028}>{name}</Label>
                </Row>
              ))}
              <ColumnFoot>
                <Drawing width="28" height="29" viewBox="0 0 28 29" stroke={PURPLE} strokeWidth="1.800"><path d="M14 .5V28M.5 14H27.500" /></Drawing>
                <Label $ml={12} $c="#702ba0" $weight={600} $ls={-0.036}>Add section</Label>
              </ColumnFoot>
            </Column>
            <Column $w={196} $last>
              {PAGES.map((name) => (
                <Row key={name} $pad={32.500} $active={name === "ML"}>{name}</Row>
              ))}
              <ColumnFoot>
                <Drawing width="28" height="29" viewBox="0 0 28 29" stroke={PURPLE} strokeWidth="1.800"><path d="M14 .5V28M.5 14H27.500" /></Drawing>
                <Label $ml={12} $c="#702ba0" $weight={600} $ls={-0.030}>Add page</Label>
              </ColumnFoot>
            </Column>
          </Columns>
        </Panel>

        <Canvas>
          <NotePage />
          <ScrollThumb />
        </Canvas>
      </Body>

      <TaskBar>
        {renderCells(APPS, 0)}
        <TaskCell $ml={15} $w={28} $bg="#f2f0f3">
          <svg width="28" height="41" viewBox="0 0 28 41" fill="none" stroke="#4f4d4f" strokeWidth="2">
            <path d="M9 15L14 9.500 19 15M9 34.500L14 39.500 19 34.500" />
          </svg>
        </TaskCell>
        {renderCells(TRAY, 1557)}
        <TrayText $ml={15} $w={40}>ENG</TrayText>
        <TrayText $ml={25} $w={74}>7:44 PM</TrayText>
        <TaskCell $ml={33} $w={28}>
          <svg width="28" height="41" viewBox="0 0 28 41">{glyphs.notice}</svg>
        </TaskCell>
      </TaskBar>

      <ShareEdge>
        <EdgePiece $w={510} $h={1} $c="#68bd42" />
        <EdgePiece $w={786} $h={4} $c="#68d66b" />
        <EdgePiece $w={244} $h={1} $c="#25232a" />
        <EdgePiece $w={506} $h={1} $c="#68bd42" />
      </ShareEdge>
    </Window>
  );
}
